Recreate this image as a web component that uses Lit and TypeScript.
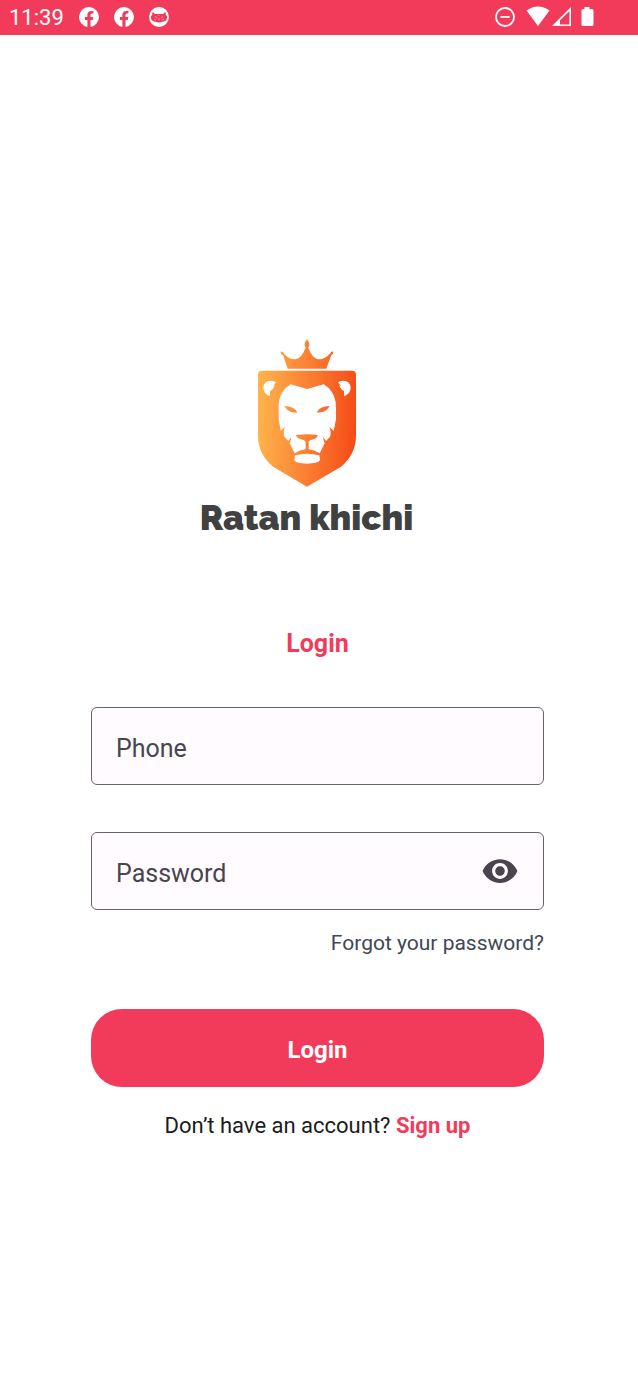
import { LitElement, html, css, svg } from "lit";
import { customElement, state } from "lit/decorators.js";

const facebook = svg`
  <path fill="#fff" d="M20 10A10 10 0 1 0 8.4 19.9v-7H5.9V10h2.5V7.800c0-2.500 1.500-3.900 3.800-3.900 1.100 0 2.200.2 2.200.2v2.500h-1.300c-1.200 0-1.600.8-1.600 1.600V10h2.800l-.5 2.900h-2.300v7A10 10 0 0 0 20 10z"/>`;

@customElement("status-bar")
export class StatusBar extends LitElement {
  static styles = css`
    :host {
      display: flex;
      justify-content: space-between;
      align-items: center;
      height: 35px;
      padding: 0 43px 0 9px;
      box-sizing: border-box;
      background: #f23b5a;
      color: #fff;
      font: 400 22px/34px Roboto, sans-serif;
    }
    .group {
      display: flex;
      align-items: flex-start;
    }
    .notices {
      align-items: center;
      gap: 15px;
    }
    svg {
      display: block;
    }
    .notices svg {
      margin-bottom: 1px;
    }
    .group:last-child svg {
      margin-bottom: 2px;
    }
  `;

  render() {
    return html`
      <div class="group notices">
        <span>11:39</span>
        <svg width="20" height="20" viewBox="0 0 20 20" aria-hidden="true">${facebook}</svg>
        <svg width="20" height="20" viewBox="0 0 20 20" aria-hidden="true">${facebook}</svg>
        <svg width="20" height="20" viewBox="0 0 20 20" aria-hidden="true">
          <circle cx="10" cy="10" r="9" fill="none" stroke="#fff" stroke-width="1.800" />
          <path fill="#fff" d="M1 7Q3 1 10 .5T19 7l-2 2-.5-4.500L14 7H6L3.500 4.500 3 9z" />
          <path fill="#fff" d="M2 13l3 1.500 2 .500 3 .5 3-.5 2-.5 3-1.500-2 4-6 2.500-6-2.500z" />
          <path
            fill="none"
            stroke="#fff"
            stroke-width=".7"
            stroke-opacity=".7"
            d="M6 9.500l1.500 1M14 9.500l-1.500 1M9 12h2M5 12.500l2 .5M15 12.500l-2 .5M9.500 8.500h1"
          />
        </svg>
      </div>
      <div class="group">
        <svg width="100" height="22" viewBox="0 0 100 22" aria-hidden="true">
          <circle cx="10" cy="11" r="9" fill="none" stroke="#fff" stroke-width="1.800" />
          <path d="M5.500 11h9" stroke="#fff" stroke-width="1.800" />
          <path fill="#fff" d="M31.500 4.500Q43 -3.500 54.500 4.500L43 20z" />
          <path fill="#fff" fill-rule="evenodd" d="M57 20L76 1v19zM65 18.400h9.400V4.900L65 14.300z" />
          <path
            fill="#fff"
            d="M89.500 1h5v2H97q1.500 0 1.500 1.500v14Q98.500 20 97 20H88q-1.500 0-1.500-1.500v-14Q86.500 3 88 3h1.500z"
          />
        </svg>
      </div>
    `;
  }
}

@customElement("brand-logo")
export class BrandLogo extends LitElement {
  static styles = css`
    :host {
      display: flex;
      flex-direction: column;
      align-items: center;
      color: #414142;
    }
    svg {
      display: block;
    }
    .name {
      margin-top: 2px;
      font: 900 35px/48px Raleway, Lato, sans-serif;
      white-space: nowrap;
    }
  `;

  render() {
    return html`
      <svg width="130" height="162" viewBox="5 0 390 486" aria-hidden="true">
        <defs>
          <linearGradient id="fire" gradientUnits="userSpaceOnUse" x1="54" y1="240" x2="347" y2="250">
            <stop offset="0" stop-color="#ffb34b" />
            <stop offset=".5" stop-color="#fb8033" />
            <stop offset="1" stop-color="#f54c17" />
          </linearGradient>
        </defs>
        <path
          fill="url(#fire)"
          d="M142 116L128 75Q120 73 121 65Q127 62 130 70Q145 89 166 88Q185 82 196 53Q188 43 200 28Q212 43 204 53Q214 82 233 88Q254 89 270 70Q273 62 279 65Q280 73 273 75L258 116Z"
        />
        <path
          fill="url(#fire)"
          d="M66 122H335Q347 122 347 134V318Q346 374 302 410L200 470L98 410Q54 374 53 318V134Q53 122 66 122Z"
        />
        <g fill="#fff">
          <path
            d="M151 163L200 177L250 163Q265 171 276 188Q288 208 287 236V268L280 303L267 290Q274 308 269 320L257 333L248 321Q249 331 253 340L238 370Q222 360 205 358V335Q207 331 219 328Q232 324 232 315Q200 311 167 315Q169 324 182 328Q194 331 196 335V358Q179 360 163 370L148 340Q152 331 153 321L144 333L132 320Q127 308 134 290L121 303L115 268V236Q113 208 125 188Q136 171 151 163Z"
          />
          <path
            d="M89 199Q68 190 69 172Q71 153 91 152Q103 152 107 157L98 168L104 166Q98 177 95 180L89 183Z"
          />
          <path
            d="M311 199Q332 190 331 172Q329 153 309 152Q297 152 293 157L302 168L296 166Q302 177 305 180L311 183Z"
          />
          <path d="M164 376Q200 367 237 376L239 391Q232 401 200 401T162 391Z" />
        </g>
        <g fill="url(#fire)">
          <path d="M132 228Q163 229 171 247Q145 251 132 228Z" />
          <path d="M268 228Q237 229 229 247Q255 251 268 228Z" />
        </g>
      </svg>
      <div class="name">Ratan khichi</div>
    `;
  }
}

@customElement("app-root")
export class AppRoot extends LitElement {
  static styles = css`
    :host {
      display: flex;
      flex-direction: column;
      min-height: 100vh;
      background: #fff;
      color: #1c1b1f;
      font-family: Roboto, sans-serif;
    }
    .page {
      display: flex;
      flex-direction: column;
      padding: 295px 94px 0 91px;
    }
    brand-logo {
      padding-right: 22px;
    }
    h1 {
      margin: 84px 0 45px;
      color: #f23b5a;
      font: 700 25px/36px Roboto, sans-serif;
      text-align: center;
    }
    form {
      display: flex;
      flex-direction: column;
    }
    .field {
      display: grid;
      grid-template-columns: 1fr auto;
      align-items: center;
      height: 78px;
      box-sizing: border-box;
      margin-bottom: 47px;
      border: 1px solid #69636d;
      border-radius: 6px;
      background: #fffbff;
      color: #49454f;
      font-size: 25px;
      line-height: 36px;
    }
    .field.last {
      margin-bottom: 16px;
    }
    .field label {
      grid-area: 1 / 1;
      padding: 5px 24px 0;
      pointer-events: none;
    }
    .field input {
      grid-area: 1 / 1 / 2 / 3;
      align-self: stretch;
      min-width: 0;
      padding: 0 24px;
      border: 0;
      border-radius: 5px;
      background: none;
      color: inherit;
      font: inherit;
    }
    .field input:not(:placeholder-shown) + label {
      visibility: hidden;
    }
    .eye {
      grid-area: 1 / 2;
      padding: 0;
      margin-right: 24px;
      border: 0;
      background: none;
      color: #49454f;
      cursor: pointer;
    }
    .eye svg {
      display: block;
    }
    .forgot {
      align-self: flex-end;
      color: #414757;
      font-size: 21px;
      line-height: 34px;
      text-decoration: none;
    }
    .submit {
      height: 78px;
      margin: 49px 0 22px;
      padding: 3px 0 0;
      border: 0;
      border-radius: 31px;
      background: #f23b5a;
      color: #fff;
      font: 700 24px/36px Roboto, sans-serif;
      cursor: pointer;
    }
    .signup {
      margin: 0;
      font-size: 22px;
      line-height: 34px;
      text-align: center;
    }
    .signup a {
      color: #f23b5a;
      font-weight: 700;
      text-decoration: none;
    }
  `;

  @state() private revealed = false;

  render() {
    return html`
      <status-bar></status-bar>
      <main class="page">
        <brand-logo></brand-logo>
        <h1>Login</h1>
        <form @submit=${(e: Event) => e.preventDefault()}>
          <div class="field">
            <input id="phone" type="tel" placeholder=" " autocomplete="tel" />
            <label for="phone">Phone</label>
          </div>
          <div class="field last">
            <input
              id="password"
              type=${this.revealed ? "text" : "password"}
              placeholder=" "
              autocomplete="current-password"
            />
            <label for="password">Password</label>
            <button
              class="eye"
              type="button"
              aria-label="Show password"
              aria-pressed=${this.revealed}
              @click=${() => (this.revealed = !this.revealed)}
            >
              <svg width="38" height="38" viewBox="0 0 24 24" fill="currentColor" aria-hidden="true">
                <path
                  d="M12 4.500C7 4.500 2.730 7.610 1 12c1.730 4.390 6 7.500 11 7.500s9.270-3.110 11-7.500c-1.730-4.390-6-7.500-11-7.500zM12 17c-2.760 0-5-2.240-5-5s2.240-5 5-5 5 2.240 5 5-2.240 5-5 5zm0-8c-1.660 0-3 1.340-3 3s1.340 3 3 3 3-1.340 3-3-1.340-3-3-3z"
                />
              </svg>
            </button>
          </div>
          <a class="forgot" href="#forgot">Forgot your password?</a>
          <button class="submit" type="submit">Login</button>
        </form>
        <p class="signup">Don’t have an account? <a href="#signup">Sign up</a></p>
      </main>
    `;
  }
}
